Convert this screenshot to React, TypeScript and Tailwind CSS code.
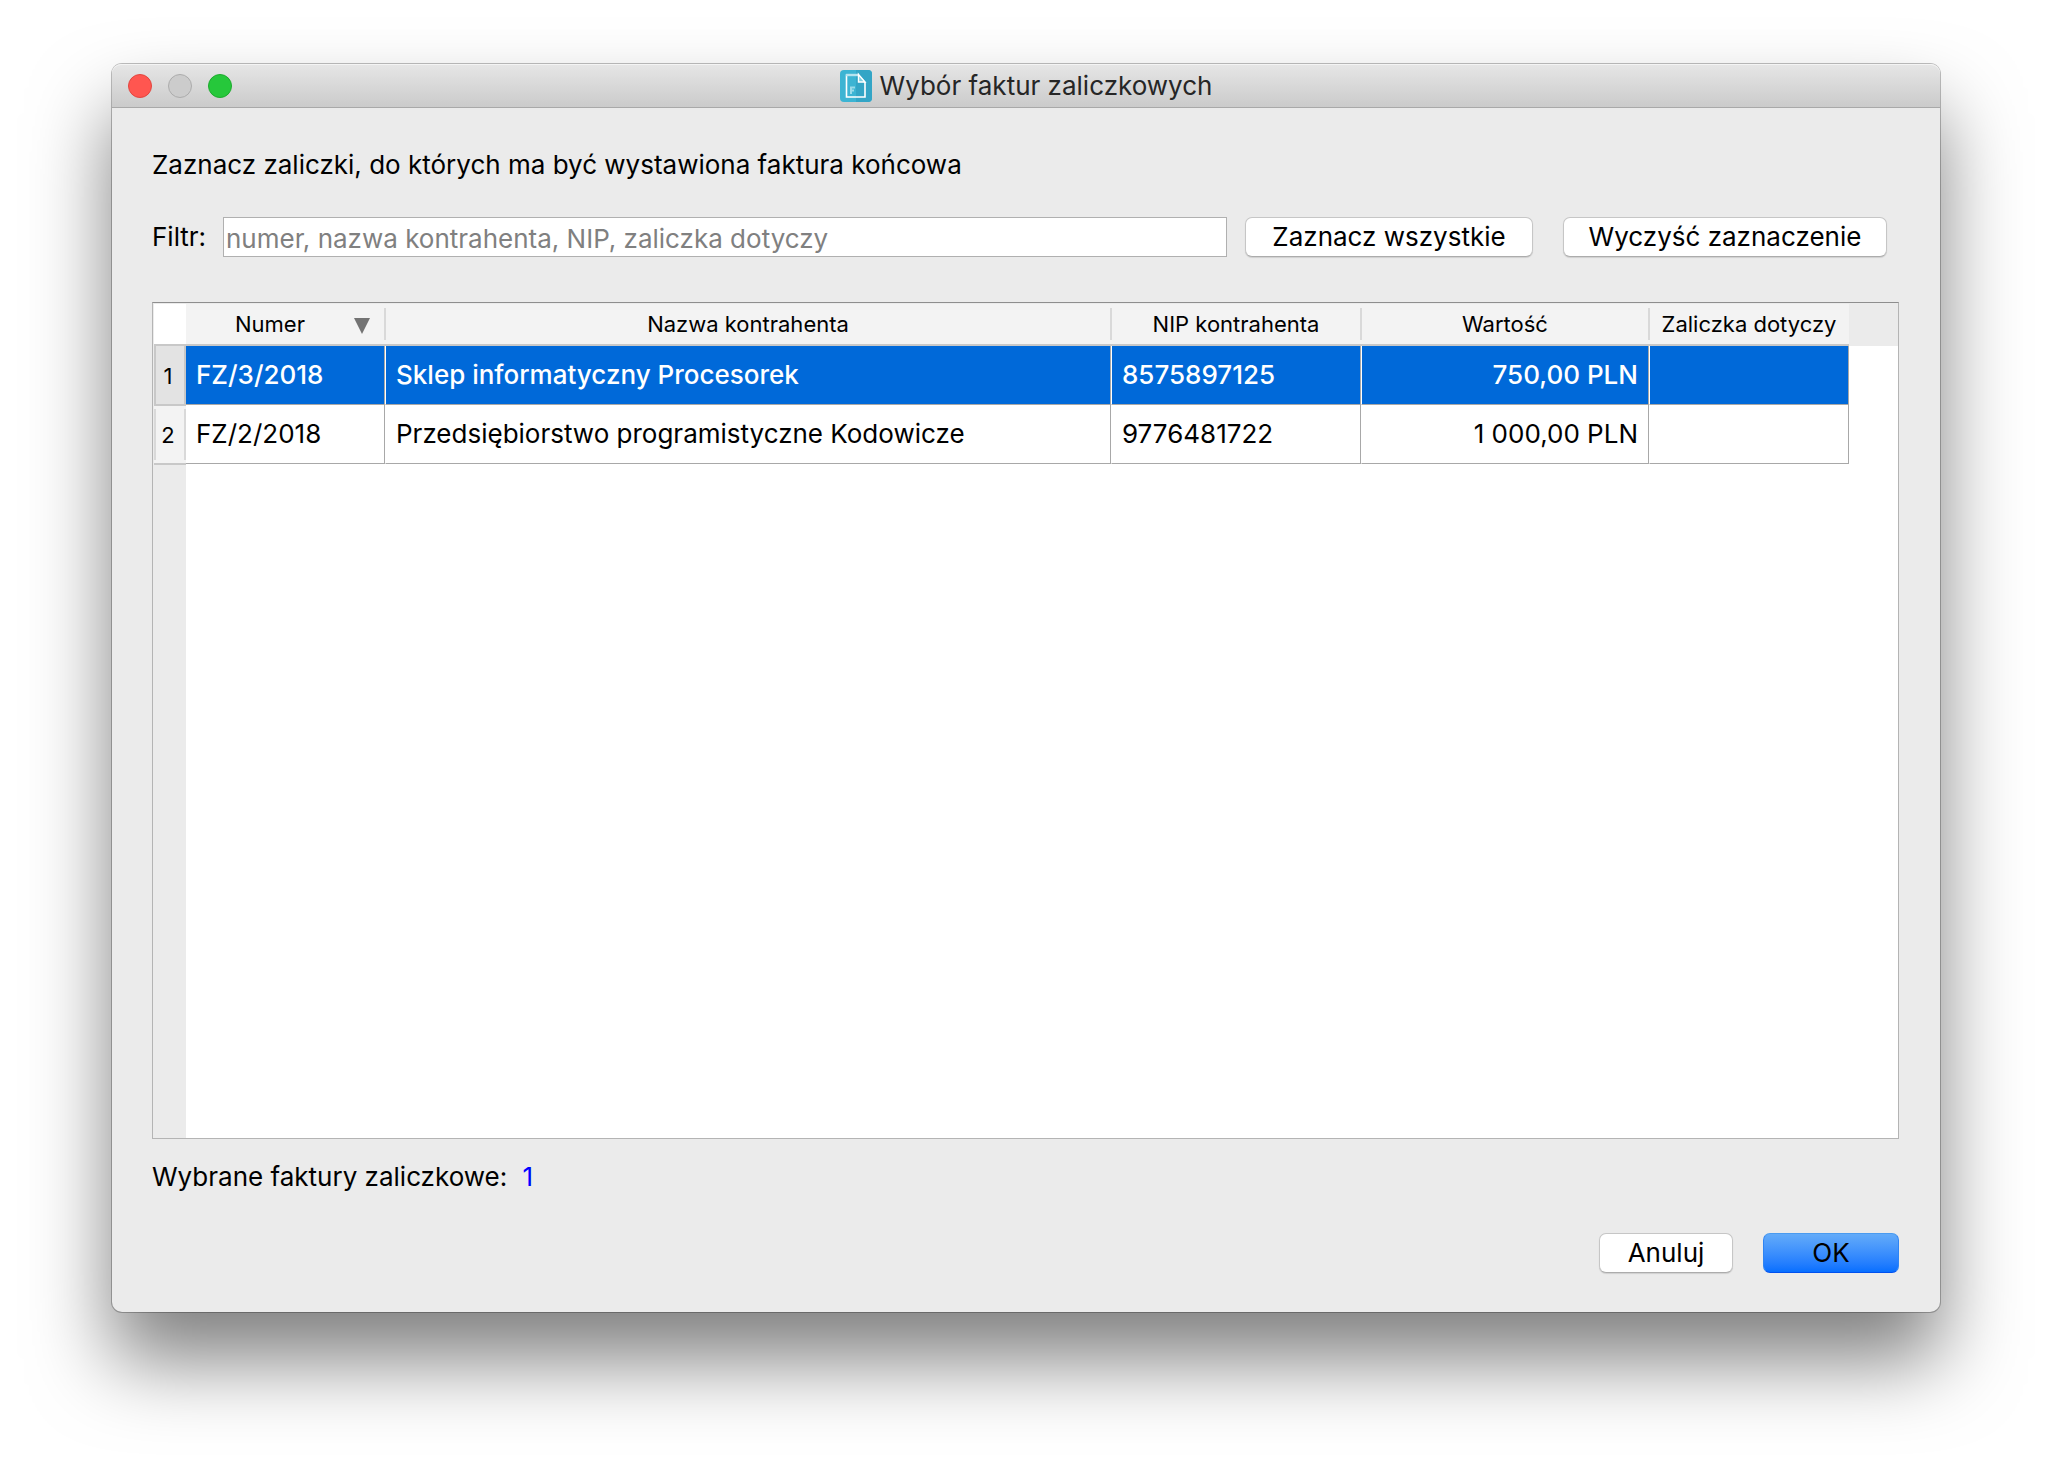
import { useState } from "react";
import clsx from "clsx";

type Invoice = {
  number: string;
  contractor: string;
  nip: string;
  value: string;
  subject: string;
};

const invoices: Invoice[] = [
  {
    number: "FZ/3/2018",
    contractor: "Sklep informatyczny Procesorek",
    nip: "8575897125",
    value: "750,00 PLN",
    subject: "",
  },
  {
    number: "FZ/2/2018",
    contractor: "Przedsiębiorstwo programistyczne Kodowicze",
    nip: "9776481722",
    value: "1 000,00 PLN",
    subject: "",
  },
];

const columns = [
  { label: "Numer", width: "w-[199px]", sorted: true },
  { label: "Nazwa kontrahenta", width: "" },
  { label: "NIP kontrahenta", width: "w-[250px]" },
  { label: "Wartość", width: "w-[288px]" },
  { label: "Zaliczka dotyczy", width: "w-[200px]" },
];

const buttonBase = "h-10 shrink-0 rounded-[7px] border text-center leading-none";
const buttonPlain =
  "border-[#c6c6c6] border-b-[#acacac] bg-white shadow-[0_1px_1px_rgba(0,0,0,0.12)]";

function AppIcon() {
  return (
    <svg viewBox="0 0 32 32" className="size-8 shrink-0" aria-hidden>
      <rect width="32" height="32" rx="4" fill="#3cb4d3" />
      <path d="M16 0h12a4 4 0 0 1 4 4v24a4 4 0 0 1-4 4H16z" fill="#33a5c6" />
      <path d="M6.5 5H18l7 7.5V27H6.5z" fill="none" stroke="#fff" strokeWidth="1.6" />
      <path d="M6 5h13" stroke="#b5e3ef" strokeWidth="2.4" />
      <path d="M18.5 4.5V12H25z" fill="#7fcfe2" stroke="#fff" strokeWidth="1.4" />
      <path d="M11 24v-6.500h4M11 20.500h3" fill="none" stroke="#9adbea" strokeWidth="2" />
    </svg>
  );
}

function TitleBar() {
  return (
    <header className="grid h-11 grid-cols-[1fr_auto_1fr] items-center rounded-t-[9px] border-b border-[#a9a9a9] bg-linear-to-b from-[#e6e6e6] to-[#cbcbcb] px-4 shadow-[inset_0_1px_0_#f4f4f4]">
      <div className="flex gap-4">
        <button type="button" aria-label="Zamknij" className="size-6 rounded-full border border-[#e2463f] bg-[#ff5650]" />
        <button type="button" aria-label="Minimalizuj" disabled className="size-6 rounded-full border border-[#acacac] bg-[#cccccc]" />
        <button type="button" aria-label="Powiększ" className="size-6 rounded-full border border-[#1dab2e] bg-[#26c83b]" />
      </div>
      <div className="flex items-center gap-2">
        <AppIcon />
        <h1 className="text-[#262626]">Wybór faktur zaliczkowych</h1>
      </div>
    </header>
  );
}

function InvoiceTable({ selected, onSelect }: { selected: number; onSelect: (index: number) => void }) {
  return (
    <div className="mt-[45px] flex flex-1 flex-col border border-[#b4b4b4] border-t-[#8e8e8e] bg-[#ebebeb] pt-px pl-px">
      <div className="flex">
        <table className="flex-1 table-fixed border-separate border-spacing-0">
          <thead className="text-[22px]">
            <tr className="h-[42px]">
              <td className="w-8 border-b-2 border-[#c8c8c8] bg-white" />
              {columns.map((column, i) => (
                <th
                  key={column.label}
                  scope="col"
                  className={clsx(
                    "relative border-b-2 border-[#c8c8c8] bg-[#f3f3f3] p-0 font-normal",
                    column.width,
                    i < columns.length - 1 &&
                      "after:absolute after:top-1 after:-right-px after:z-10 after:h-8 after:w-0.5 after:bg-[#d9d9d9]",
                  )}
                >
                  <div className="flex items-center">
                    <span className={clsx("flex-1 text-center whitespace-nowrap", column.sorted && "pl-4")}>
                      {column.label}
                    </span>
                    {column.sorted && (
                      <svg viewBox="0 0 16 16" className="mt-1 mr-[15px] ml-4 size-4" aria-hidden>
                        <path d="M0 0h16L8 16z" fill="#737373" />
                      </svg>
                    )}
                  </div>
                </th>
              ))}
            </tr>
          </thead>
          <tbody>
            {invoices.map((invoice, i) => {
              const active = i === selected;
              const cell = clsx(
                "border-r border-b border-[#a8a8a8] px-[10px] py-0 whitespace-nowrap",
                active ? "bg-[#0069d9] font-medium text-white" : "bg-white",
              );
              const inner = clsx(cell, "border-l", active ? "border-l-white" : "border-l-transparent");
              return (
                <tr key={invoice.number} className="h-[59px]" aria-selected={active} onClick={() => onSelect(i)}>
                  <th scope="row" className={clsx("relative p-0 text-[22px] font-normal", active ? "bg-[#e3e3e3]" : "bg-[#f3f3f3]")}>
                    {active ? (
                      <span className="absolute inset-x-0 top-0 -bottom-px z-10 border-x-2 border-b-2 border-[#c8c8c8]" />
                    ) : (
                      <>
                        <span className="absolute inset-x-0 inset-y-1 border-x-2 border-[#d9d9d9]" />
                        <span className="absolute inset-x-0 -bottom-px h-0.5 bg-[#c8c8c8]" />
                      </>
                    )}
                    <span className="pr-1">{i + 1}</span>
                  </th>
                  <td className={cell}>{invoice.number}</td>
                  <td className={inner}>{invoice.contractor}</td>
                  <td className={inner}>{invoice.nip}</td>
                  <td className={clsx(inner, "text-right")}>{invoice.value}</td>
                  <td className={inner}>{invoice.subject}</td>
                </tr>
              );
            })}
          </tbody>
        </table>
        <div className="w-[49px] bg-white">
          <div className="h-[42px] bg-[#ebebeb]" />
        </div>
      </div>
      <div className="ml-8 flex-1 bg-white" />
    </div>
  );
}

export default function App() {
  const [filter, setFilter] = useState("");
  const [selected, setSelected] = useState(0);

  return (
    <div className="flex min-h-screen flex-col bg-white px-28 pt-16 pb-40 font-[Inter,sans-serif] text-[26px] leading-8 text-black">
      <main className="flex flex-1 flex-col rounded-[10px] bg-[#ebebeb] shadow-[0_0_0_1px_rgba(0,0,0,0.25),0_48px_80px_rgba(0,0,0,0.5)]">
        <TitleBar />
        <div className="flex flex-1 flex-col pt-[41px] pr-[41px] pb-[39px] pl-10">
          <p>Zaznacz zaliczki, do których ma być wystawiona faktura końcowa</p>

          <div className="mt-9 flex items-center pr-3">
            <label htmlFor="filter" className="w-[71px] shrink-0">
              Filtr:
            </label>
            <input
              id="filter"
              type="text"
              value={filter}
              onChange={(e) => setFilter(e.target.value)}
              placeholder="numer, nazwa kontrahenta, NIP, zaliczka dotyczy"
              className="mr-[18px] h-10 min-w-0 flex-1 border border-[#b0b0b0] bg-white px-0.5 pt-0.5 placeholder:text-[#808080] placeholder:opacity-100"
            />
            <button type="button" className={clsx(buttonBase, buttonPlain, "mr-[30px] w-72")}>
              Zaznacz wszystkie
            </button>
            <button type="button" onClick={() => setSelected(-1)} className={clsx(buttonBase, buttonPlain, "w-[324px]")}>
              Wyczyść zaznaczenie
            </button>
          </div>

          <InvoiceTable selected={selected} onSelect={setSelected} />

          <p className="mt-[22px]">
            Wybrane faktury zaliczkowe: <span className="ml-2 text-[#0000ff]">{selected < 0 ? 0 : 1}</span>
          </p>

          <div className="mt-10 flex justify-end gap-[30px]">
            <button type="button" className={clsx(buttonBase, buttonPlain, "w-[134px]")}>
              Anuluj
            </button>
            <button
              type="button"
              className={clsx(
                buttonBase,
                "w-[136px] border-[#2f84f3] border-t-[#4a9bf0] border-b-[#0050ef] bg-linear-to-b from-[#63abf9] to-[#056fff]",
              )}
            >
              OK
            </button>
          </div>
        </div>
      </main>
    </div>
  );
}
